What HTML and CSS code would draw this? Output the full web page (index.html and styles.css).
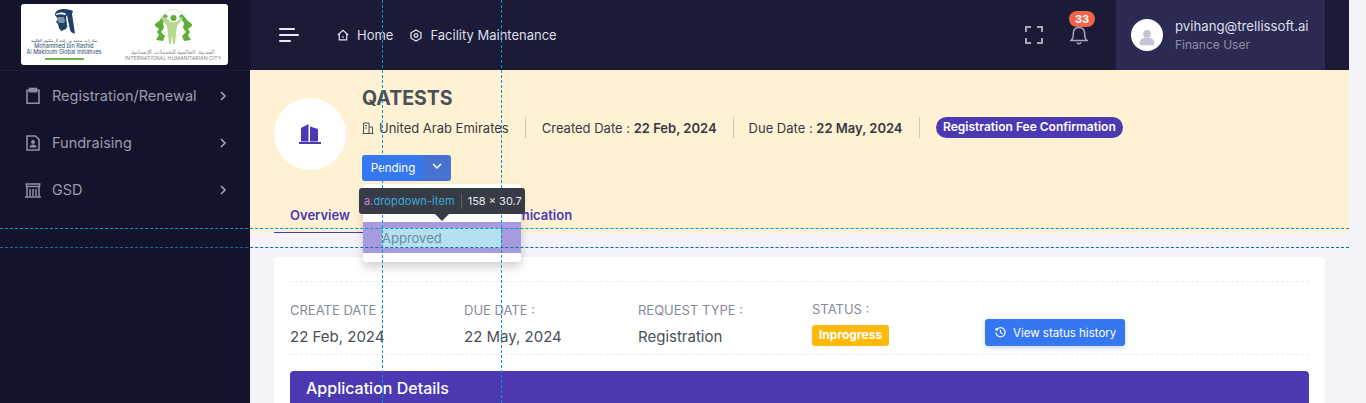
FILE: index.html
```html
<!DOCTYPE html>
<html lang="en">
<head>
<meta charset="utf-8">
<title>Facility Maintenance</title>
<link rel="stylesheet" href="styles.css">
</head>
<body>
<div class="app">
  <aside class="sidebar">
    <div class="brand">
      <div class="logo">
        <div class="logo-part logo-left">
          <svg class="sheikh" width="24" height="25" viewBox="0 0 24 25"><path fill="#1f3f66" d="M4 6C4 2 8 0 13 0c4 0 7 1 9 2l-1 3c1 6 2 13 3 20l-4-2-3-7-2 4-5 2-2-3-1-4-2-2 2-3z"/><path fill="#fff" d="M16 6l3 15-3-5-1-8z"/><path fill="#fff" d="M5 5c3-2 8-2 10 0l-1 1c-3-1-6-1-9 0z"/><path fill="#7f93a8" d="M7 8h6l1 4-2 4H9l-2-3z"/><path fill="#1f3f66" d="M7 14h6l-1 4H9z"/></svg>
          <span class="ar">مبادرات محمد بن راشد آل مكتوم العالمية</span>
          <span class="en">Mohammed bin Rashid</span>
          <span class="en">Al Maktoum Global Initiatives</span>
          <i class="rule"></i>
        </div>
        <div class="logo-part logo-right">
          <svg width="37" height="38" viewBox="0 0 37 38"><circle cx="18.500" cy="14" r="13.500" fill="none" stroke="#dcebc9" stroke-width="1"/><path fill="#5fae3c" d="M0 15l4-3 6-7 3 2-5 7 1 5-3 4 4 4-2 5-7-1 3-5-2-3 2-3-4-3zM37 15l-4-3-6-7-3 2 5 7-1 5 3 4-4 4 2 5 7-1-3-5 2-3-2-3 4-3z"/><circle cx="18.500" cy="9" r="3" fill="#5fae3c"/><path fill="#b5d98f" d="M10 8l6 5h5l6-5 1 1-6 8-1 8-1 10h-2l-1-9-1 9h-2l-1-10-1-8-6-8z"/></svg>
          <span class="ar">المدينة العالمية للخدمات الإنسانية</span>
          <span class="en">INTERNATIONAL HUMANITARIAN CITY</span>
        </div>
      </div>
    </div>
    <nav class="menu">
      <a class="menu-item">
        <svg width="18" height="18" viewBox="0 0 18 18" fill="none" stroke="#8e8ea6" stroke-width="1.600"><path d="M5.500 3.200H3v13h12v-13h-2.500"/><rect x="5.500" y="1.500" width="7" height="3.200" fill="#8e8ea6"/></svg>
        <span>Registration/Renewal</span>
        <svg class="chev" width="8" height="10" viewBox="0 0 8 10" fill="none" stroke="#a9a9bd" stroke-width="1.500"><path d="M2 1l4 4-4 4"/></svg>
      </a>
      <a class="menu-item">
        <svg width="18" height="18" viewBox="0 0 18 18" fill="none" stroke="#8e8ea6" stroke-width="1.600"><path d="M3 2h8.500L15 5.500V16H3z"/><circle cx="9" cy="8" r="2" fill="#8e8ea6" stroke="none"/><path d="M5.500 13.500c0-4 7-4 7 0z" fill="#8e8ea6" stroke="none"/></svg>
        <span>Fundraising</span>
        <svg class="chev" width="8" height="10" viewBox="0 0 8 10" fill="none" stroke="#a9a9bd" stroke-width="1.500"><path d="M2 1l4 4-4 4"/></svg>
      </a>
      <a class="menu-item">
        <svg width="18" height="18" viewBox="0 0 18 18" fill="none" stroke="#8e8ea6" stroke-width="1.500"><path d="M1.500 3h15M2.500 3v2.500h13V3M1 16h16M3 15.500V5.500h12v10M6 8v7M9 8v7M12 8v7"/></svg>
        <span>GSD</span>
        <svg class="chev" width="8" height="10" viewBox="0 0 8 10" fill="none" stroke="#a9a9bd" stroke-width="1.500"><path d="M2 1l4 4-4 4"/></svg>
      </a>
    </nav>
  </aside>

  <main class="main">
    <header class="topbar">
      <button class="burger"><i></i><i></i><i></i></button>
      <div class="crumbs">
        <a class="crumb">
          <svg width="12" height="12" viewBox="0 0 12 12" fill="none" stroke="#e4e4ee" stroke-width="1.200"><path d="M.8 6L6 1.200 11.200 6M2.300 5v5.800h7.400V5"/><path d="M5 8h2"/></svg>
          <span>Home</span>
        </a>
        <a class="crumb">
          <svg width="12" height="13" viewBox="0 0 12 13" fill="none" stroke="#e4e4ee" stroke-width="1.300"><path d="M6 1l5 2.800v5.400L6 12 1 9.200V3.800z"/><circle cx="6" cy="6.500" r="1.800"/></svg>
          <span>Facility Maintenance</span>
        </a>
      </div>
      <div class="tools">
        <svg width="18" height="18" viewBox="0 0 18 18" fill="none" stroke="#a6a6bb" stroke-width="2"><path d="M1 6V1h5M12 1h5v5M17 12v5h-5M6 17H1v-5"/></svg>
        <div class="bell">
          <svg width="18" height="20" viewBox="0 0 18 20" fill="none" stroke="#a6a6bb" stroke-width="1.500"><path d="M9 .5v2M1 15.500c2-1.500 2.300-3 2.300-6.500C3.300 5 5.500 2.500 9 2.500S14.700 5 14.700 9c0 3.500.3 5 2.300 6.500z"/><path d="M7 17.500c.5 1.500 3.500 1.500 4 0"/></svg>
          <b class="badge">33</b>
        </div>
      </div>
      <div class="user">
        <div class="avatar">
          <svg width="22" height="24" viewBox="0 0 22 24" fill="#c4c3d6"><circle cx="11" cy="7" r="5.500"/><path d="M2.500 23c-1.500 0-2-1-2-3 0-5 4-7.500 10.500-7.500S21.500 15 21.500 20c0 2-.5 3-2 3z"/></svg>
        </div>
        <div class="user-text">
          <span class="mail">pvihang@trellissoft.ai</span>
          <span class="role">Finance User</span>
        </div>
      </div>
    </header>

    <section class="banner">
      <div class="banner-top">
        <div class="circle">
          <svg width="22" height="20" viewBox="0 0 22 20" fill="#4c38b3"><path d="M2 4l7.500-4v17.500H2zM11 2.500l8 2.500v12.500h-8zM0 18h22v2H0z"/></svg>
        </div>
        <div class="info">
          <h1>QATESTS</h1>
          <div class="meta">
            <span class="meta-item">
              <svg width="12" height="12" viewBox="0 0 12 12" fill="none" stroke="#495057" stroke-width="1"><path d="M.5 11.500h11M1.500 11.500V1h5.500v10.500M7 5h3.500v6.500M3 3.500h2M3 6h2"/></svg>
              <span>United Arab Emirates</span>
            </span>
            <span class="meta-item created"><span>Created Date : <b>22 Feb, 2024</b></span></span>
            <span class="meta-item"><span>Due Date : <b>22 May, 2024</b></span></span>
            <span class="pill">Registration Fee Confirmation</span>
          </div>
          <div class="split">
            <span class="split-main">Pending</span>
            <span class="split-caret"><svg width="10" height="7" viewBox="0 0 10 7" fill="none" stroke="#fff" stroke-width="1.500"><path d="M1 1l4 4 4-4"/></svg></span>
          </div>
        </div>
      </div>
      <div class="tabs">
        <a class="tab active">Overview</a>
        <a class="tab comm">Communication</a>
      </div>
    </section>

    <section class="content">
      <div class="card">
        <div class="facts">
          <div class="fact"><span class="label">CREATE DATE :</span><span class="value">22 Feb, 2024</span></div>
          <div class="fact"><span class="label">DUE DATE :</span><span class="value">22 May, 2024</span></div>
          <div class="fact"><span class="label">REQUEST TYPE :</span><span class="value">Registration</span></div>
          <div class="fact status"><span class="label">STATUS :</span><span class="tag">Inprogress</span></div>
          <a class="history">
            <svg width="11" height="11" viewBox="0 0 12 12" fill="none" stroke="#fff" stroke-width="1.300"><path d="M1.800 3A5 5 0 1 1 1 6M1.200 1v2.300h2.300M6 3.300V6l2 1.400"/></svg>
            <span>View status history</span>
          </a>
        </div>
        <div class="details-head">Application Details</div>
      </div>
    </section>
  </main>
</div>

<div class="dropdown"><a class="dropdown-item"><span>Approved</span></a></div>
<div class="guide v g1"></div>
<div class="guide v g2"></div>
<div class="guide h g3"></div>
<div class="guide h g4"></div>
<div class="tip"><span class="tip-tag">a</span><span class="tip-class">.dropdown-item</span><i></i><span class="tip-size">158 × 30.7</span></div>
</body>
</html>
```
FILE: styles.css
```css
* { box-sizing: border-box; }
html, body { margin: 0; height: 403px; overflow: hidden; }
body { font-family: Inter, "Liberation Sans", sans-serif; background: #f3f3f9; color: #495057; position: relative; }
a { text-decoration: none; }
.app { display: flex; height: 403px; width: 1349px; }

.sidebar { width: 250px; flex: none; background: #13142b; }
.brand { height: 71px; padding: 4px 22px 0 21px; border-bottom: 1px solid #1c1d38; }
.logo { height: 61px; background: #fff; border-radius: 3px; display: flex; justify-content: space-between; padding: 4px 5px 3px 5px; overflow: hidden; }
.logo-part { display: flex; flex-direction: column; align-items: center; }
.logo-left { width: 76px; }
.logo-right { width: 100px; margin-top: 1px; }
.logo-left span, .logo-right span { white-space: nowrap; }
.logo-left span { color: #2c4a6b; font-size: 5.500px; line-height: 5.500px; }
.logo-left .ar { font-size: 4.200px; line-height: 6px; }
.logo-right span { color: #8b8b8b; font-size: 5.200px; line-height: 6px; }
.logo-right .ar { font-size: 6px; margin-top: 2px; }
.sheikh { margin-bottom: 4px; margin-left: -3px; margin-top: 1px; flex: none; }
.rule { display: block; width: 39px; height: 2px; background: #6bb645; margin-top: 3px; flex: none; }

.menu { padding-top: 1px; }
.menu-item { height: 47px; display: flex; align-items: center; padding-left: 24px; padding-right: 23px; gap: 10px; color: #9a9ab0; font-size: 14.500px; }
.menu-item span { flex: 1; }
.chev { flex: none; }

.main { flex: 1; min-width: 0; display: flex; flex-direction: column; }
.topbar { height: 70px; flex: none; background: #1b1b37; display: flex; align-items: center; padding-left: 29px; }
.burger { width: 20px; height: 14px; padding: 0; border: 0; background: none; display: flex; flex-direction: column; justify-content: space-between; }
.burger i { display: block; height: 2px; background: #e9e9f2; width: 100%; border-radius: 1px; }
.burger i:nth-child(1) { width: 16px; }
.burger i:nth-child(3) { width: 12px; }
.crumbs { display: flex; gap: 17px; margin-left: 38px; }
.crumb { display: flex; align-items: center; gap: 8px; color: #dfdfe9; font-size: 13px; }
.tools { margin-left: auto; display: flex; align-items: center; gap: 27px; margin-right: 28px; }
.bell { position: relative; display: flex; }
.badge { position: absolute; left: -1px; top: -14px; width: 26px; height: 16px; border-radius: 8px; background: #f0654a; color: #fff; font-size: 11px; font-weight: 700; text-align: center; line-height: 16px; }
.user { width: 209px; height: 70px; margin-right: 24px; background: #2a2a52; display: flex; align-items: center; gap: 12px; padding-left: 15px; }
.avatar { width: 32px; height: 32px; border-radius: 50%; background: #fff; display: flex; align-items: flex-end; justify-content: center; padding-bottom: 5px; }
.avatar svg { width: 16px; height: 17px; }
.user-text { display: flex; flex-direction: column; gap: 3px; }
.mail { color: #dfdfe9; font-size: 13.200px; line-height: 16px; }
.role { color: #8f8fa8; font-size: 12px; line-height: 15px; }

.banner { height: 163px; flex: none; background: #fff1d3; padding: 0 24px; display: flex; flex-direction: column; }
.banner-top { display: flex; gap: 16px; padding-top: 16px; }
.circle { width: 72px; height: 72px; margin-top: 12px; border-radius: 50%; background: #fff; display: flex; align-items: center; justify-content: center; }
.info { display: flex; flex-direction: column; }
h1 { margin: 0 0 7px; font-size: 19.500px; line-height: 24px; font-weight: 700; color: #495057; }
.meta { display: flex; align-items: center; height: 21px; font-size: 13px; color: #343a40; }
.meta-item { display: flex; align-items: center; gap: 5px; padding-right: 16px; margin-right: 16px; border-right: 1px solid #d3c7ae; height: 21px; white-space: nowrap; }
.meta-item.created { margin-right: 15px; }
.meta-item b { font-weight: 600; }
.pill { background: #4c38b3; color: #fff; font-size: 12px; font-weight: 600; padding: 0 7.500px; height: 21px; line-height: 20px; border-radius: 11px; white-space: nowrap; }
.split { display: flex; margin-top: 17px; height: 26px; width: 89px; border-radius: 3px; overflow: hidden; font-size: 11.500px; color: #fff; }
.split-main { flex: 1; background: #3577f1; display: flex; align-items: center; justify-content: center; padding-left: 1px; }
.split-caret { width: 28px; background: #4573cf; display: flex; align-items: center; justify-content: center; padding-bottom: 3px; }
.tabs { display: flex; margin-top: auto; }
.tab { font-size: 13px; font-weight: 600; color: #4c38b3; height: 35px; padding: 9px 16px 0; white-space: nowrap; }
.tab.active { border-bottom: 1px solid #4c38b3; }
.tab.comm { margin-left: 91px; }

.content { flex: 1; padding: 24px 24px 0; min-height: 0; overflow: hidden; }
.card { background: #fff; border-radius: 4px; height: 200px; padding: 24px 16px 0; }
.facts { border-top: 1px dashed #e9ebec; border-bottom: 1px dashed #e9ebec; height: 74px; display: flex; align-items: flex-start; }
.fact { width: 174px; display: flex; flex-direction: column; padding-top: 20px; }
.fact.status { width: 173px; padding-top: 19px; }
.label { font-size: 13px; color: #878a99; line-height: 17px; }
.value { font-size: 15px; color: #495057; line-height: 20px; margin-top: 8px; }
.tag { align-self: flex-start; background: #ffb90a; color: #fff; font-size: 12px; font-weight: 700; height: 21px; line-height: 20px; padding: 0 7px; border-radius: 3px; margin-top: 7px; }
.history { margin-top: 37px; height: 27px; width: 140px; background: #3577f1; border-radius: 3px; color: #fff; font-size: 11.500px; display: flex; align-items: center; gap: 7px; padding-left: 10px; box-shadow: 0 2px 5px rgba(53,119,241,.25); white-space: nowrap; }
.details-head { margin-top: 16px; height: 60px; background: #4c38b3; border-radius: 4px 4px 0 0; color: #fff; font-size: 16px; font-weight: 500; padding: 7px 16px; }

.dropdown { position: absolute; left: 363px; top: 184px; width: 158px; height: 78px; background: #fff; border-radius: 4px; box-shadow: 0 5px 10px rgba(30,32,37,.2); padding-top: 38px; }
.dropdown-item { display: block; height: 31px; padding: 6px 20px 5px 19px; background: #a79ade; font-size: 13px; line-height: 20px; color: #6a8d9d; }
.dropdown-item span { display: block; height: 20px; background: #b5e0f0; }
.guide { position: absolute; }
.guide.v { top: 0; height: 403px; width: 0; border-left: 1px dashed #0d93d2; }
.guide.h { left: 0; width: 1349px; height: 0; }
.g1 { left: 382px; }
.g2 { left: 501px; }
.g3 { top: 228px; border-top: 1px dashed #0d93d2; }
.g4 { top: 247px; border-top: 1px dashed #0d6f9f; }
.tip { position: absolute; left: 359px; top: 188px; width: 166px; height: 26px; background: #363b45; border-radius: 3px; display: flex; align-items: center; padding-left: 5px; font-size: 11px; color: #e8eaed; white-space: nowrap; }
.tip::after { content: ""; position: absolute; left: 76px; top: 26px; border: 7px solid transparent; border-top-color: #363b45; border-bottom: 0; }
.tip-tag { color: #d67ee0; }
.tip-class { color: #3da9dc; letter-spacing: .1px; }
.tip i { width: 1px; height: 15px; background: #5b606a; margin: 0 6px; }
```
